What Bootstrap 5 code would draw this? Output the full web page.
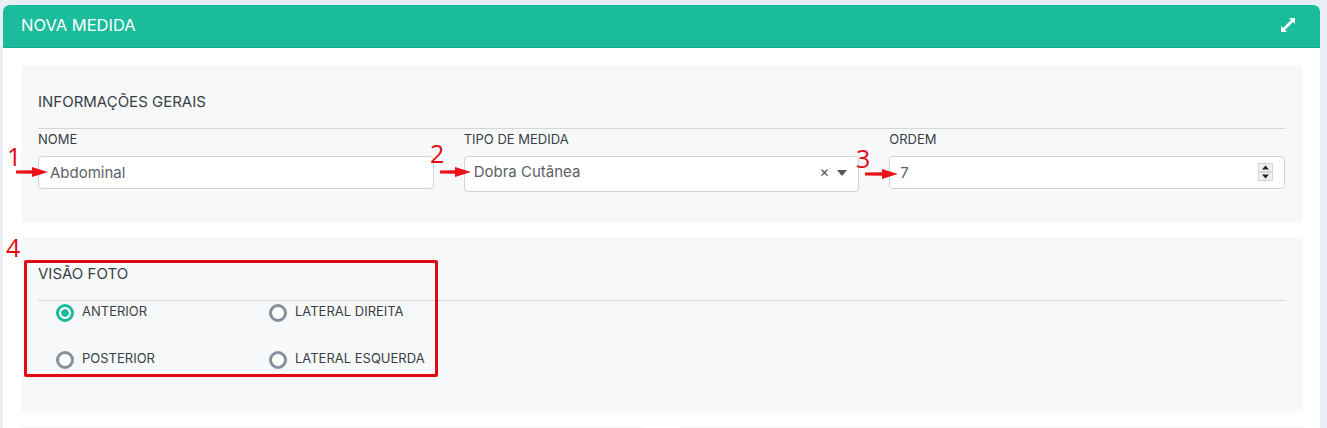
<!DOCTYPE html>
<html lang="pt-BR">
<head>
<meta charset="utf-8">
<title>Nova Medida</title>
<link href="https://cdn.jsdelivr.net/npm/bootstrap@5.3.0/dist/css/bootstrap.min.css" rel="stylesheet">
<style>
html,body{height:428px;overflow:hidden}
body{background:#e9edf4;font-family:Inter,"Open Sans",sans-serif;color:#343a40;padding:5px 7px 0 3px;position:relative}
.sheet{background:#fff;border:0;border-radius:6px 6px 0 0;height:423px;overflow:hidden}
.sheet-head{background:#1abc9c;color:#fff;height:43px;padding:0 25px 2px 18px;border-radius:6px 6px 0 0;font-size:16.5px;border-bottom:1px solid #18ab8e}
.sheet-body{padding:17px 17px 0 18px}
.panel{background:#f7f8fa;border-radius:4px;padding:0 18px 0 17px;margin-bottom:14px}
.panel-a{height:158px;padding-top:28px}
.panel-b{height:175px;padding-top:28px}
.panel-title{font-size:15px;font-weight:400;line-height:18px;margin:0;color:#3a3f44}
.panel-rule{margin:17px 0 0;border-top:1px solid #d4d6da;opacity:1}
.fields{--bs-gutter-x:30px}
.field-label{font-size:13px;line-height:16px;margin:2px 0 9px;display:block;color:#3a3f44}
.field-input{height:33px;border:1px solid #ced4da;border-radius:4px;font-size:15px;color:#5c6167;padding:0 10px 0 11px;box-shadow:none;background:#fff}
.field-input[type=number]{padding-left:10px}
.field-input[type=number]::-webkit-inner-spin-button{-webkit-appearance:none;appearance:none;opacity:1;width:15px;height:18px;margin:0 1px 0 0;background:url("data:image/svg+xml,%3Csvg xmlns='http://www.w3.org/2000/svg' width='15' height='18'%3E%3Crect width='15' height='18' fill='%23d6d6d6'/%3E%3Crect x='1' y='1' width='13' height='7' fill='%23f0f0f0'/%3E%3Crect x='1' y='10' width='13' height='7' fill='%23f0f0f0'/%3E%3Cpath d='M7.5 2.5l3.5 4H4z M7.5 15.5l-3.5-4h7z' fill='%23222'/%3E%3C/svg%3E") no-repeat}
.field-select{height:36px;padding:0 10px 3px 9px}
.sel-x{font-size:15px;color:#555;margin-right:8px}
.sel-caret{width:0;height:0;border-left:5.5px solid transparent;border-right:5.5px solid transparent;border-top:6px solid #555}
.field-select .sel-caret{margin-right:1px}
.radios{display:grid;grid-template-columns:213px 213px;grid-auto-rows:47px;padding:0 0 0 18px}
.radio-item{display:flex;align-items:flex-start;gap:8px;padding:1px 0 0;margin:0;min-height:0;font-size:13px;line-height:18px;color:#3a3f44}
.radio-item .form-check-input{width:18px;height:18px;margin:2px 0 0;flex:none;float:none;border:3px solid #84909c;background:#fff;box-shadow:none}
.radio-item .form-check-input:checked{border-color:#1abc9c;background:radial-gradient(circle,#1abc9c 0 3.5px,#fff 4px)}
.lower{display:flex;gap:35px}
.lower .panel{flex:1;height:2px;margin:0}
.mark-num{position:absolute;color:#e00b12;font-family:"Open Sans",sans-serif;font-size:25px;line-height:24px}
.mark-arrow{position:absolute;height:10px}
.mark-box{position:absolute;left:24px;top:260px;width:414px;height:117px;border:3px solid #e00b12;border-radius:2px;pointer-events:none}
</style>
</head>
<body>
<div class="sheet">
  <div class="sheet-head d-flex align-items-center justify-content-between">
    <span>NOVA MEDIDA</span>
    <svg width="14" height="14" viewBox="0 0 14 14" fill="#fff" aria-hidden="true"><path d="M8 0H14V6L12 4 4 12 6 14H0V8L2 10 10 2z"/></svg>
  </div>
  <div class="sheet-body">
    <section class="panel panel-a">
      <h6 class="panel-title">INFORMAÇÕES GERAIS</h6>
      <hr class="panel-rule">
      <div class="row fields">
        <div class="col-4">
          <label class="field-label" for="f-nome">NOME</label>
          <input id="f-nome" class="form-control field-input" value="Abdominal">
        </div>
        <div class="col-4">
          <span class="field-label">TIPO DE MEDIDA</span>
          <div class="form-control field-input field-select d-flex align-items-center">
            <span class="flex-grow-1">Dobra Cutânea</span><span class="sel-x">×</span><span class="sel-caret"></span>
          </div>
        </div>
        <div class="col-4">
          <label class="field-label" for="f-ordem">ORDEM</label>
          <input id="f-ordem" type="number" class="form-control field-input" value="7">
        </div>
      </div>
    </section>
    <section class="panel panel-b">
      <h6 class="panel-title">VISÃO FOTO</h6>
      <hr class="panel-rule">
      <div class="radios">
        <label class="form-check radio-item"><input class="form-check-input" type="radio" name="visao" checked>ANTERIOR</label>
        <label class="form-check radio-item"><input class="form-check-input" type="radio" name="visao">LATERAL DIREITA</label>
        <label class="form-check radio-item"><input class="form-check-input" type="radio" name="visao">POSTERIOR</label>
        <label class="form-check radio-item"><input class="form-check-input" type="radio" name="visao">LATERAL ESQUERDA</label>
      </div>
    </section>
    <div class="lower"><div class="panel"></div><div class="panel"></div></div>
  </div>
</div>

<span class="mark-num" style="left:7px;top:144px">1</span>
<span class="mark-num" style="left:430px;top:141px">2</span>
<span class="mark-num" style="left:856px;top:146px">3</span>
<span class="mark-num" style="left:6px;top:235px">4</span>
<svg class="mark-arrow" style="left:16px;top:167px;width:32px" viewBox="0 0 32 10" fill="#e8141a"><path d="M0 3.5 16 3.2V0L32 5 16 10V6.8L0 6.5z"/></svg>
<svg class="mark-arrow" style="left:440px;top:167px;width:31px" viewBox="0 0 31 10" fill="#e8141a"><path d="M0 3.5 15 3.2V0L31 5 15 10V6.8L0 6.5z"/></svg>
<svg class="mark-arrow" style="left:865px;top:169px;width:33px" viewBox="0 0 33 10" fill="#e8141a"><path d="M0 3.5 17 3.2V0L33 5 17 10V6.8L0 6.5z"/></svg>
<div class="mark-box"></div>
<script src="https://cdn.jsdelivr.net/npm/bootstrap@5.3.0/dist/js/bootstrap.bundle.min.js"></script>
</body>
</html>
